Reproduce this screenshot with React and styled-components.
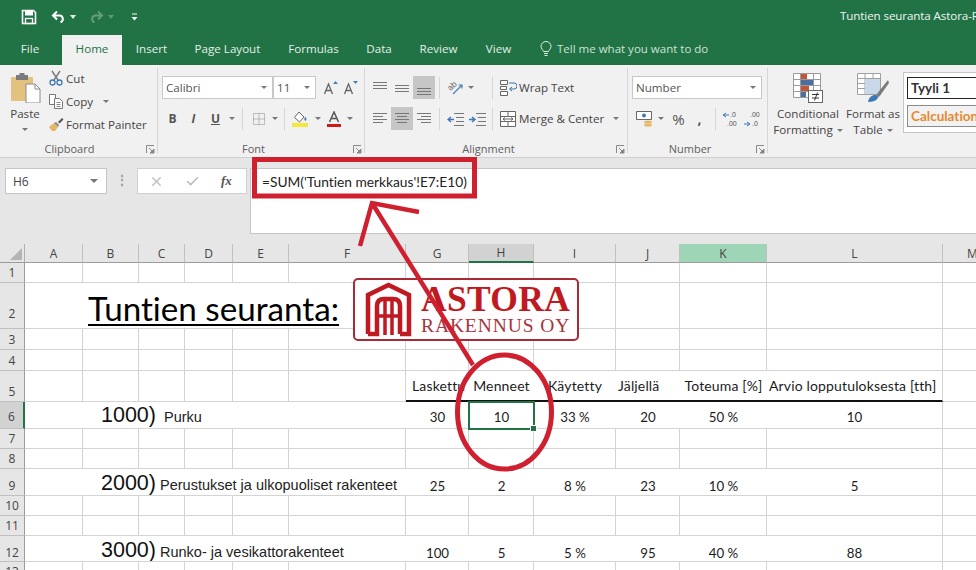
import React from "react";
import styled, { createGlobalStyle } from "styled-components";
import { X, Check } from "lucide-react";

const UI = `"Open Sans", "Noto Sans", sans-serif`;
const CELL = `Lato, "Open Sans", sans-serif`;
const GREEN = "#217346";
const RED = "#cf2030";

const GlobalStyle = createGlobalStyle`
  html, body { margin: 0; padding: 0; background: #fff; }
  body { font-family: ${UI}; font-variant-ligatures: none; }
`;

const Page = styled.div`
  position: relative;
  width: 976px;
  height: 570px;
  overflow: hidden;
`;

/* title bar + tabs */
const TitleBar = styled.div`
  height: 35px;
  background: ${GREEN};
  display: flex;
  align-items: center;
  padding-left: 21px;
  color: #fff;
`;
const Qat = styled.div`
  display: flex;
  align-items: center;
  gap: 4px;
  margin-top: -2px;
`;
const DocTitle = styled.div`
  margin-left: auto;
  width: 136px;
  margin-top: -4px;
  overflow: hidden;
  white-space: nowrap;
  font-size: 11.6px;
  letter-spacing: -0.1px;
  color: #eef5f0;
`;
const Tabs = styled.div`
  height: 30px;
  background: ${GREEN};
  display: flex;
  padding-left: 6px;
`;
const Tab = styled.div`
  width: ${(p) => p.$w}px;
  margin-left: ${(p) => p.$ml || 0}px;
  display: flex;
  align-items: center;
  justify-content: center;
  font-size: 11.6px;
  padding-bottom: 3px;
  box-sizing: border-box;
  color: ${(p) => (p.$active ? GREEN : "#e4efe8")};
  background: ${(p) => (p.$active ? "#f1f1f1" : "transparent")};
`;
const TellMe = styled.div`
  display: flex;
  align-items: center;
  gap: 5px;
  margin-left: 15px;
  padding-bottom: 3px;
  font-size: 11.5px;
  color: #cfe2d7;
`;

/* ribbon */
const Ribbon = styled.div`
  height: 93px;
  box-sizing: border-box;
  background: #f1f1f1;
  border-bottom: 1px solid #cfcfcf;
  display: flex;
  overflow: hidden;
  color: #444;
  font-size: 11.6px;
`;
const Group = styled.div`
  position: relative;
  width: ${(p) => p.$w}px;
  flex: none;
  box-sizing: border-box;
  margin: 3px 0 4px;
  border-right: ${(p) => (p.$last ? "none" : "1px solid #d6d6d6")};
  display: flex;
  flex-direction: column;
`;
const GroupBody = styled.div`
  height: 75px;
  flex: none;
  display: flex;
  padding-left: ${(p) => p.$pl || 0}px;
  padding-top: ${(p) => p.$pt || 0}px;
  box-sizing: border-box;
`;
const GroupLabel = styled.div`
  height: 12px;
  flex: none;
  line-height: 12px;
  text-align: center;
  font-size: 11px;
  padding-right: ${(p) => p.$pr ?? 15}px;
  color: #606060;
`;
const Launcher = styled.svg`
  position: absolute;
  right: 2px;
  bottom: -1px;
  width: 9px;
  height: 9px;
`;
const Caret = styled.span`
  display: inline-block;
  flex: none;
  width: 0;
  height: 0;
  margin-left: ${(p) => p.$ml || 0}px;
  border-left: 3px solid transparent;
  border-right: 3px solid transparent;
  border-top: 3px solid #777;
`;
const PasteBtn = styled.div`
  width: 34px;
  display: flex;
  flex-direction: column;
  align-items: center;
  margin-left: 8px;
  padding-top: 5px;
  span.label { margin-top: 3px; line-height: 16px; }
`;
const ClipList = styled.div`
  display: flex;
  flex-direction: column;
  margin-left: 6px;
  padding-top: 1px;
  gap: 5px;
`;
const ClipRow = styled.div`
  height: 18px;
  display: flex;
  align-items: center;
  white-space: nowrap;
  svg { width: 16px; height: 16px; margin-right: 2px; flex: none; }
`;
const Stack = styled.div`
  display: flex;
  flex-direction: column;
  gap: ${(p) => p.$gap ?? 8}px;
`;
const ToolRow = styled.div`
  display: flex;
  align-items: center;
  height: 23px;
`;
const Combo = styled.div`
  width: ${(p) => p.$w}px;
  height: 23px;
  box-sizing: border-box;
  margin-left: ${(p) => p.$ml || 0}px;
  background: #fff;
  border: 1px solid #c8c8c8;
  display: flex;
  align-items: center;
  justify-content: space-between;
  padding: 0 5px 0 3px;
  color: #555;
`;
const Tool = styled.div`
  width: ${(p) => p.$w || 22}px;
  height: 23px;
  flex: none;
  display: flex;
  align-items: center;
  justify-content: center;
  background: ${(p) => (p.$active ? "#c6c6c6" : "transparent")};
  font-weight: ${(p) => (p.$bold ? 700 : 400)};
  font-style: ${(p) => (p.$italic ? "italic" : "normal")};
  text-decoration: ${(p) => (p.$under ? "underline" : "none")};
  font-size: ${(p) => p.$fs || 12}px;
  color: #555;
`;
const Sep = styled.div`
  width: 1px;
  height: 22px;
  flex: none;
  margin: 0 ${(p) => p.$m || 4}px;
  background: #d6d6d6;
`;
const WideBtn = styled.div`
  display: flex;
  align-items: center;
  white-space: nowrap;
  height: 23px;
  margin-left: 3px;
  svg { margin-right: 2px; }
`;
const BigBtn = styled.div`
  width: ${(p) => p.$w}px;
  flex: none;
  display: flex;
  flex-direction: column;
  align-items: center;
  padding-top: 5px;
  line-height: 16px;
  text-align: center;
  svg { margin-bottom: 3px; }
`;
const Gallery = styled.div`
  width: 90px;
  height: 61px;
  margin-top: 4px;
  box-sizing: border-box;
  border: 1px solid #c6c6c6;
  border-right: none;
  background: #fff;
  padding: 4px 0 0 3px;
  display: flex;
  flex-direction: column;
  gap: 6px;
`;
const StyleChip = styled.div`
  height: 22px;
  box-sizing: border-box;
  border: 1px solid ${(p) => (p.$calc ? "#8c8c8c" : "#222")};
  border-right: none;
  background: ${(p) => (p.$calc ? "#f2f2f2" : "#fff")};
  color: ${(p) => (p.$calc ? "#e8892f" : "#333")};
  font-family: ${CELL};
  font-weight: 700;
  font-size: 13.5px;
  line-height: 20px;
  padding-left: 3px;
  white-space: nowrap;
  overflow: hidden;
`;

/* formula bar */
const FormulaArea = styled.div`
  height: 86px;
  background: #e6e6e6;
  display: flex;
  align-items: flex-start;
  padding-top: 10px;
  box-sizing: border-box;
`;
const NameBox = styled.div`
  width: 102px;
  height: 26px;
  margin-left: 5px;
  box-sizing: border-box;
  background: #fff;
  border: 1px solid #c6c6c6;
  display: flex;
  align-items: center;
  justify-content: space-between;
  padding: 0 8px 0 7px;
  font-size: 12px;
  color: #444;
`;
const Dots = styled.div`
  width: 30px;
  text-align: center;
  color: #999;
  font-size: 12px;
  line-height: 24px;
  font-weight: 700;
`;
const FxBox = styled.div`
  width: 110px;
  height: 26px;
  box-sizing: border-box;
  background: #fff;
  border: 1px solid #d0d0d0;
  display: flex;
  align-items: center;
  gap: 21px;
  padding-left: 11px;
  span {
    font-family: "Liberation Serif", serif;
    font-style: italic;
    font-weight: 700;
    font-size: 13px;
    color: #555;
  }
`;
const FormulaBar = styled.div`
  flex: 1;
  height: 66px;
  margin-left: 3px;
  box-sizing: border-box;
  background: #fff;
  border-left: 1px solid #c6c6c6;
  border-top: 1px solid #c6c6c6;
  border-bottom: 1px solid #c6c6c6;
  padding: 4px 0 0 11px;
  font-family: ${CELL};
  font-size: 13.75px;
  line-height: 18px;
  color: #222;
`;

/* sheet */
const Sheet = styled.div`
  display: grid;
  grid-template-columns: 25px 58px 56px 46px 48px 56px 117px 63px 65px 82px 64px 87px 176px 60px;
  grid-template-rows: 19px 20px 46px 21px 21px 31px 27px 20px 20px 27px 20px 20px 26px 20px;
  background: #fff;
  font-family: ${CELL};
`;
const Corner = styled.div`
  background: #e6e6e6;
  border-bottom: 1px solid #9c9c9c;
  border-right: 1px solid #b0b0b0;
  position: relative;
  &::after {
    content: "";
    position: absolute;
    right: 2px;
    bottom: 2px;
    width: 0;
    height: 0;
    border-left: 12px solid transparent;
    border-bottom: 12px solid #b4b4b4;
  }
`;
const ColHead = styled.div`
  box-sizing: border-box;
  background: ${(p) => (p.$tone === "sel" ? "#d2d2d2" : p.$tone === "mark" ? "#9fd5b7" : "#e6e6e6")};
  border-bottom: ${(p) => (p.$tone === "sel" ? `2px solid ${GREEN}` : "1px solid #9c9c9c")};
  border-right: 1px solid #c0c0c0;
  font-family: ${UI};
  font-size: 12px;
  color: #444;
  display: flex;
  align-items: center;
  justify-content: center;
`;
const RowHead = styled.div`
  box-sizing: border-box;
  background: ${(p) => (p.$sel ? "#d2d2d2" : "#e6e6e6")};
  border-bottom: 1px solid #c0c0c0;
  border-right: ${(p) => (p.$sel ? `2px solid ${GREEN}` : "1px solid #9c9c9c")};
  font-family: ${UI};
  font-size: 12px;
  line-height: 16px;
  color: #444;
  display: flex;
  align-items: flex-end;
  justify-content: center;
  padding-bottom: ${(p) => p.$pb}px;
`;
const Cell = styled.div`
  box-sizing: border-box;
  grid-column: span ${(p) => p.$span || 1};
  border-bottom: ${(p) => (p.$rule ? "2px solid #111" : "1px solid #d4d4d4")};
  border-right: ${(p) => (p.$open ? "none" : "1px solid #d4d4d4")};
  display: flex;
  align-items: flex-end;
  justify-content: ${(p) => (p.$left ? "flex-start" : "center")};
  padding: 0 0 ${(p) => p.$pb ?? 2}px ${(p) => p.$pl || 0}px;
  overflow: hidden;
  white-space: nowrap;
  font-size: ${(p) => (p.$rule ? 14 : 13.3)}px;
  letter-spacing: ${(p) => (p.$rule ? 0.15 : 0)}px;
  line-height: 16px;
  color: #1c1c1c;
`;
const SheetTitle = styled.span`
  font-size: 33.2px;
  line-height: 40px;
  color: #000;
  text-decoration: underline;
  text-decoration-thickness: 2px;
  text-underline-offset: 3px;
`;
const Code = styled.span`
  font-family: "Liberation Sans", Arial, sans-serif;
  font-size: 21.5px;
  line-height: 22px;
  color: #111;
`;
const Desc = styled.span`
  font-family: "Liberation Sans", Arial, sans-serif;
  font-size: 14.5px;
  line-height: 18px;
  margin-left: ${(p) => p.$ml}px;
  color: #222;
`;

/* things over the sheet */
const Selection = styled.div`
  position: absolute;
  left: 468px;
  top: 401px;
  width: 67px;
  height: 29px;
  box-sizing: border-box;
  border: 2px solid ${GREEN};
  &::after {
    content: "";
    position: absolute;
    right: -4px;
    bottom: -4px;
    width: 5px;
    height: 5px;
    background: ${GREEN};
    border: 1px solid #fff;
  }
`;
const Logo = styled.div`
  position: absolute;
  left: 353px;
  top: 278px;
  width: 226px;
  height: 63px;
  box-sizing: border-box;
  background: #fffdfd;
  border: 2px solid #a82a35;
  border-radius: 5px;
  display: flex;
  align-items: center;
  padding-left: 10px;
  gap: 9px;
  color: #bf1a22;
`;
const LogoWords = styled.div`
  display: flex;
  flex-direction: column;
  gap: 6px;
  font-family: "Liberation Serif", serif;
`;
const LogoMain = styled.span`
  font-size: 35.5px;
  font-weight: 700;
  line-height: 26px;
  letter-spacing: 0.3px;
`;
const LogoSub = styled.span`
  font-size: 19.5px;
  line-height: 15px;
  letter-spacing: 0.9px;
  color: #a9343c;
`;
const Overlay = styled.svg`
  position: absolute;
  left: 0;
  top: 0;
  pointer-events: none;
`;

/* icons */
const SaveIcon = () => (
  <svg width="16" height="16" viewBox="0 0 16 16">
    <path d="M1.500 1.500h11l2 2v11h-13z" fill="none" stroke="#fff" strokeWidth="1.600" />
    <rect x="4" y="2" width="8" height="4.500" fill="#fff" />
    <rect x="4.500" y="9.500" width="7" height="5" fill="none" stroke="#fff" strokeWidth="1.300" />
  </svg>
);
const UndoIcon = ({ flip, dim }) => (
  <svg width="15" height="14" viewBox="0 0 15 14" style={{ transform: flip ? "scaleX(-1)" : "none", opacity: dim ? 0.3 : 1 }}>
    <path d="M6 1.500 2 5.500l4 4M2 5.500h6.500a3.500 3.500 0 0 1 1 6.800" fill="none" stroke="#fff" strokeWidth="2" />
  </svg>
);
const MiniCaret = ({ dim }) => (
  <svg width="6" height="4" viewBox="0 0 6 4" style={{ opacity: dim ? 0.3 : 1 }}>
    <path d="M0 0h6L3 4z" fill="#e8f1ec" />
  </svg>
);
const QatMore = () => (
  <svg width="7" height="8" viewBox="0 0 7 8" style={{ marginLeft: 13 }}>
    <path d="M1 1h5" stroke="#fff" />
    <path d="M0.500 4h6L3.500 7.500z" fill="#fff" />
  </svg>
);
const Bulb = () => (
  <svg width="12" height="16" viewBox="0 0 12 16">
    <path d="M3.500 10.500C3 8.500 1 8 1 5.500a5 5 0 0 1 10 0C11 8 9 8.500 8.500 10.500z" fill="none" stroke="#dfece5" />
    <path d="M4 12.500h4M4.500 14.500h3" stroke="#dfece5" />
  </svg>
);
const PasteIcon = () => (
  <svg width="31" height="30" viewBox="0 0 31 30">
    <rect x="1" y="4" width="22" height="24" rx="1" fill="#e3c17f" />
    <rect x="6" y="2" width="12" height="5" fill="#7b7b7b" />
    <rect x="9.500" y="0" width="5" height="3" fill="#7b7b7b" />
    <path d="M16 11h9l5 5v14H16z" fill="#fff" stroke="#8c8c8c" />
    <path d="M25 11v5h5" fill="none" stroke="#8c8c8c" />
  </svg>
);
const CutIcon = () => (
  <svg viewBox="0 0 16 16">
    <path d="M4 1l6 9M12 1 6 10" stroke="#777" strokeWidth="1.400" />
    <circle cx="4.500" cy="12.500" r="2.500" fill="none" stroke="#3c78b4" strokeWidth="1.300" />
    <circle cx="11.500" cy="12.500" r="2.500" fill="none" stroke="#3c78b4" strokeWidth="1.300" />
  </svg>
);
const CopyIcon = () => (
  <svg viewBox="0 0 16 16">
    <path d="M1.500 1.500h6v10h-6z" fill="#fff" stroke="#777" />
    <path d="M6.500 5.500h5l3 3v7h-8z" fill="#fff" stroke="#777" />
    <path d="M8.500 9.500h4M8.500 11.500h4M8.500 13.500h4" stroke="#888" />
  </svg>
);
const BrushIcon = () => (
  <svg viewBox="0 0 16 16">
    <path d="M1 11l5-4 4 4-3 4H4z" fill="#e3b766" />
    <path d="M6 7l4 4 1-2-3-3z" fill="#8a8a8a" />
    <path d="M10 6l4-4 1.500 1.500-4 4z" fill="#555" />
  </svg>
);
const BorderIcon = () => (
  <svg width="14" height="14" viewBox="0 0 14 14">
    <path d="M1.500 1.500h11v11h-11zM7 1.500v11M1.500 7h11" fill="none" stroke="#888" strokeDasharray="1 1" />
  </svg>
);
const FillIcon = () => (
  <svg width="18" height="16" viewBox="0 0 18 16">
    <path d="M7 1 2.500 6.500 7.500 11 12 6z" fill="#fff" stroke="#666" />
    <path d="M13 5.500c1.500 2 2 3 1 4-1 .6-2-.4-1.500-2z" fill="#3c78b4" />
    <rect x="0" y="12" width="16" height="4" fill="#f4e83a" />
  </svg>
);
const ColorA = () => (
  <svg width="14" height="16" viewBox="0 0 14 16">
    <path d="M2.500 11 7 1l4.500 10M4.200 7.500h5.600" fill="none" stroke="#555" strokeWidth="1.500" />
    <rect x="0" y="13" width="14" height="3" fill="#d01a1a" />
  </svg>
);
const GrowA = ({ small }) => (
  <svg width="16" height="15" viewBox="0 0 16 15">
    <path d="M1.500 14 5.500 4l4 10M3 10.500h5" fill="none" stroke="#666" strokeWidth="1.300" />
    <path d={small ? "M10 1h5l-2.500 3z" : "M10 4h5l-2.500-3z"} fill="#4a7fb5" />
  </svg>
);
const Lines = ({ rows, w = 16 }) => (
  <svg width={w} height="16" viewBox={`0 0 ${w} 16`}>
    {rows.map(([a, b, y], i) => (
      <path key={i} d={`M${a} ${y + 0.5}H${b}`} stroke="#777" />
    ))}
  </svg>
);
const Orient = () => (
  <svg width="17" height="16" viewBox="0 0 17 16">
    <text x="1" y="9" fontSize="8.500" fill="#666" fontFamily="Liberation Sans" transform="rotate(-45 5 7)">ab</text>
    <path d="M6 14 15 5M11.500 5H15v3.500" fill="none" stroke="#4a7fb5" strokeWidth="1.200" />
  </svg>
);
const Indent = ({ flip }) => (
  <svg width="17" height="14" viewBox="0 0 17 14">
    <path d="M7 1.500h10M9 5.500h8M9 9.500h8M7 13.500h10" stroke="#777" />
    {flip ? (
      <path d="M0 7.500h5M3 5l3 2.500L3 10" fill="none" stroke="#3c78b4" strokeWidth="1.400" />
    ) : (
      <path d="M7 7.500H1M4 5 1 7.500 4 10" fill="none" stroke="#3c78b4" strokeWidth="1.400" />
    )}
  </svg>
);
const WrapIcon = () => (
  <svg width="17" height="16" viewBox="0 0 17 16">
    <path d="M.5.500h7v4h-7zM.5 6.500h6v3h-6zM.5 11.500h7v4h-7z" fill="#fff" stroke="#666" />
    <path d="M9 3h5a2 2 0 0 1 0 6h-4M12 7 9.500 9l2.500 2" fill="none" stroke="#3c78b4" />
  </svg>
);
const MergeIcon = () => (
  <svg width="17" height="16" viewBox="0 0 17 16">
    <path d="M.5.500h15v15H.5zM.5 5.500h15M.5 10.500h15M8 .5v5M8 10.500v5" fill="#fff" stroke="#666" />
    <path d="M3 8h10M5 6.500 3 8l2 1.500M11 6.500 13 8l-2 1.500" fill="none" stroke="#666" />
  </svg>
);
const MoneyIcon = () => (
  <svg width="18" height="17" viewBox="0 0 18 17">
    <path d="M.5 1.500h15v8H.5z" fill="#fff" stroke="#666" />
    <circle cx="8" cy="5.500" r="2" fill="#3c78b4" />
    <ellipse cx="12" cy="12" rx="4" ry="1.500" fill="#e3b766" />
    <ellipse cx="12" cy="15" rx="4" ry="1.500" fill="#e3b766" />
  </svg>
);
const DecIcon = ({ more }) => (
  <svg width="20" height="18" viewBox="0 0 20 18">
    <path d={more ? "M1 5H7M4 3 1 5l3 2" : "M1 14h6M4 12l3 2-3 2"} fill="none" stroke="#3c78b4" />
    <text x={more ? 8 : 7} y="7" fontSize="7" fill="#555" fontFamily="Liberation Sans">{more ? ".0" : ".00"}</text>
    <text x={more ? 5 : 9} y="16" fontSize="7" fill="#555" fontFamily="Liberation Sans">{more ? ".00" : ".0"}</text>
  </svg>
);
const CondIcon = () => (
  <svg width="30" height="30" viewBox="0 0 30 30">
    <path d="M.5.500h27v24H.5zM7.500.5v24M20.500.5v24M.5 6.500h27M.5 12.500h27M.5 18.500h27" fill="#fff" stroke="#9a9a9a" />
    <rect x="8" y="1" width="6" height="5" fill="#c0573a" />
    <rect x="8" y="7" width="12" height="5" fill="#4a6fa5" />
    <rect x="8" y="13" width="8" height="5" fill="#c0573a" />
    <rect x="8" y="19" width="5" height="5" fill="#4a6fa5" />
    <rect x="15.500" y="17.500" width="14" height="12" fill="#fff" stroke="#666" />
    <path d="M19 21.500h7M19 25h7M24.500 19.500l-3 8" stroke="#333" />
  </svg>
);
const TableIcon = () => (
  <svg width="32" height="30" viewBox="0 0 32 30">
    <path d="M.5.500h23v21H.5zM.5 5.500h23M.5 10.500h23M.5 15.500h23M8 .5v21M16 .5v21" fill="#fff" stroke="#a0a0a0" />
    <rect x="8" y="6" width="15" height="15" fill="#c9d8e8" />
    <path d="M31 7 19 22l3 2L32 10z" fill="#7a7a7a" />
    <path d="M11 29c1-5 4-7 7-7 2 0 4 2 3 3-2 3-6 4-10 4z" fill="#3c78b4" />
  </svg>
);
const LauncherIcon = () => (
  <Launcher viewBox="0 0 9 9">
    <path d="M.5 8V.5H8" fill="none" stroke="#888" />
    <path d="M3 3l4 4M8 4v4H4z" fill="#888" stroke="#888" />
  </Launcher>
);
const HouseMark = () => (
  <svg width="47" height="55" viewBox="0 0 47 55" style={{ flex: "none" }}>
    <g fill="none" stroke="#bf1a22" strokeWidth="4.500">
      <path d="M3 52V13L23.500 3 44 13v39H35" />
      <path d="M3 52h9V24q0-7 7-7h9q7 0 7 7v28" />
      <path d="M20 17v36M27 17v36M13 34h21" strokeWidth="3.500" />
    </g>
  </svg>
);

const COLS = ["A", "B", "C", "D", "E", "F", "G", "H", "I", "J", "K", "L", "M"];
const PLAIN_ROWS = [1, 3, 4, 7, 8, 10, 11, 13];
const ROW_PAD = { 2: 6, 6: 3, 9: 1, 12: 0 };
const VALUES = {
  6: ["30", "10", "33 %", "20", "50 %", "10"],
  9: ["25", "2", "8 %", "23", "10 %", "5"],
  12: ["100", "5", "5 %", "95", "40 %", "88"],
};
const CODES = {
  6: ["1000)", "Purku", 8, 2],
  9: ["2000)", "Perustukset ja ulkopuoliset rakenteet", 4, 1],
  12: ["3000)", "Runko- ja vesikattorakenteet", 4, 0],
};
const HEADS = [
  ["Laskettu", true, 6],
  ["Menneet"],
  ["Käytetty"],
  ["Jäljellä", true, 2],
  ["Toteuma [%]"],
  ["Arvio lopputuloksesta [tth]", true, 2],
];

const renderRow = (n) => {
  if (PLAIN_ROWS.includes(n)) {
    return COLS.map((c) => <Cell key={n + c} />);
  }
  if (n === 2) {
    return [
      <Cell key="title" $span={6} $left $pl={63} $pb={0} $open>
        <SheetTitle>Tuntien seuranta:</SheetTitle>
      </Cell>,
      ...COLS.slice(6).map((c) => <Cell key={n + c} />),
    ];
  }
  if (n === 5) {
    return [
      ...COLS.slice(0, 6).map((c) => <Cell key={n + c} />),
      ...HEADS.map(([label, left, pl], i) => (
        <Cell key={label} $rule $open={i < 5} $left={left} $pl={pl} $pb={6}>
          {label}
        </Cell>
      )),
      <Cell key="5M" />,
    ];
  }
  const [code, desc, ml, pb] = CODES[n];
  return [
    <Cell key={code} $span={6} $left $pl={76} $pb={pb} $open>
      <Code>{code}</Code>
      <Desc $ml={ml}>{desc}</Desc>
    </Cell>,
    ...VALUES[n].map((v, i) => (
      <Cell key={n + "v" + i} $open={i < 5} $pb={ROW_PAD[n]}>
        {v}
      </Cell>
    )),
    <Cell key={n + "M"} />,
  ];
};

const App = () => {
  return (
    <Page>
      <GlobalStyle />
      <TitleBar>
        <Qat>
          <SaveIcon />
          <span style={{ width: 6 }} />
          <UndoIcon />
          <MiniCaret />
          <span style={{ width: 5 }} />
          <UndoIcon flip dim />
          <MiniCaret dim />
          <QatMore />
        </Qat>
        <DocTitle>Tuntien seuranta Astora-Rakennus</DocTitle>
      </TitleBar>
      <Tabs>
        <Tab $w={48}>File</Tab>
        <Tab $w={60} $ml={8} $active>Home</Tab>
        <Tab $w={59}>Insert</Tab>
        <Tab $w={93}>Page Layout</Tab>
        <Tab $w={79}>Formulas</Tab>
        <Tab $w={52}>Data</Tab>
        <Tab $w={67}>Review</Tab>
        <Tab $w={53}>View</Tab>
        <TellMe>
          <Bulb />
          Tell me what you want to do
        </TellMe>
      </Tabs>
      <Ribbon>
        <Group $w={158}>
          <GroupBody>
            <PasteBtn>
              <PasteIcon />
              <span className="label">Paste</span>
              <Caret style={{ marginTop: 6 }} />
            </PasteBtn>
            <ClipList>
              <ClipRow><CutIcon />Cut</ClipRow>
              <ClipRow><CopyIcon />Copy<Caret $ml={10} /></ClipRow>
              <ClipRow><BrushIcon />Format Painter</ClipRow>
            </ClipList>
          </GroupBody>
          <GroupLabel $pr={18}>Clipboard</GroupLabel>
          <LauncherIcon />
        </Group>
        <Group $w={207}>
          <GroupBody $pl={4} $pt={8}>
            <Stack>
              <ToolRow>
                <Combo $w={111}>Calibri<Caret /></Combo>
                <Combo $w={43}>11<Caret /></Combo>
                <Tool $w={20} $fs={13} style={{ marginLeft: 5 }}><GrowA /></Tool>
                <Tool $w={20} $fs={13}><GrowA small /></Tool>
              </ToolRow>
              <ToolRow>
                <Tool $w={21} $bold>B</Tool>
                <Tool $w={21} $italic $bold>I</Tool>
                <Tool $w={23} $under $bold>U</Tool>
                <Tool $w={10}><Caret /></Tool>
                <Sep $m={5} />
                <Tool $w={22}><BorderIcon /></Tool>
                <Tool $w={10}><Caret /></Tool>
                <Sep $m={4} />
                <Tool $w={24}><FillIcon /></Tool>
                <Tool $w={10}><Caret /></Tool>
                <Tool $w={22}><ColorA /></Tool>
                <Tool $w={10}><Caret /></Tool>
              </ToolRow>
            </Stack>
          </GroupBody>
          <GroupLabel>Font</GroupLabel>
          <LauncherIcon />
        </Group>
        <Group $w={263}>
          <GroupBody $pl={4} $pt={8}>
            <Stack>
              <ToolRow>
                <Tool><Lines rows={[[1, 15, 2], [1, 15, 5], [1, 15, 8]]} /></Tool>
                <Tool><Lines rows={[[1, 15, 5], [1, 15, 8], [1, 15, 11]]} /></Tool>
                <Tool $active><Lines rows={[[1, 15, 8], [1, 15, 11], [1, 15, 14]]} /></Tool>
                <Sep />
                <Tool><Orient /></Tool>
                <Tool $w={18} style={{ justifyContent: "flex-start", paddingLeft: 2, boxSizing: "border-box" }}><Caret /></Tool>
                <Tool $w={4} />
                <Sep />
                <WideBtn><WrapIcon />Wrap Text</WideBtn>
              </ToolRow>
              <ToolRow>
                <Tool><Lines rows={[[1, 15, 2], [1, 11, 5], [1, 15, 8], [1, 11, 11]]} /></Tool>
                <Tool $active><Lines rows={[[1, 15, 2], [3, 13, 5], [1, 15, 8], [3, 13, 11]]} /></Tool>
                <Tool><Lines rows={[[1, 15, 2], [5, 15, 5], [1, 15, 8], [5, 15, 11]]} /></Tool>
                <Sep />
                <Tool><Indent /></Tool>
                <Tool><Indent flip /></Tool>
                <Sep />
                <WideBtn><MergeIcon />Merge &amp; Center<Caret $ml={9} /></WideBtn>
              </ToolRow>
            </Stack>
          </GroupBody>
          <GroupLabel>Alignment</GroupLabel>
          <LauncherIcon />
        </Group>
        <Group $w={140}>
          <GroupBody $pl={4} $pt={8}>
            <Stack>
              <ToolRow>
                <Combo $w={130}>Number<Caret /></Combo>
              </ToolRow>
              <ToolRow>
                <Tool $w={25}><MoneyIcon /></Tool>
                <Tool $w={8}><Caret /></Tool>
                <Tool $w={3} />
                <Tool $w={21} $fs={15}>%</Tool>
                <Tool $w={21} $fs={14} $bold>,</Tool>
                <Sep $m={5} />
                <Tool $w={22}><DecIcon more /></Tool>
                <Tool $w={20}><DecIcon /></Tool>
              </ToolRow>
            </Stack>
          </GroupBody>
          <GroupLabel>Number</GroupLabel>
          <LauncherIcon />
        </Group>
        <Group $w={208} $last>
          <GroupBody $pl={5}>
            <BigBtn $w={70}>
              <CondIcon />
              <span>Conditional</span>
              <span>Formatting<Caret $ml={4} style={{ verticalAlign: "middle" }} /></span>
            </BigBtn>
            <BigBtn $w={60}>
              <TableIcon />
              <span>Format as</span>
              <span>Table<Caret $ml={4} style={{ verticalAlign: "middle" }} /></span>
            </BigBtn>
            <Gallery>
              <StyleChip>Tyyli 1</StyleChip>
              <StyleChip $calc>Calculation</StyleChip>
            </Gallery>
          </GroupBody>
        </Group>
      </Ribbon>
      <FormulaArea>
        <NameBox>H6<Caret style={{ borderLeftWidth: 4, borderRightWidth: 4, borderTopWidth: 4 }} /></NameBox>
        <Dots>⋮</Dots>
        <FxBox>
          <X size={15} color="#bcbcbc" />
          <Check size={15} color="#bcbcbc" strokeWidth={2.5} />
          <span>fx</span>
        </FxBox>
        <FormulaBar>=SUM('Tuntien merkkaus'!E7:E10)</FormulaBar>
      </FormulaArea>
      <Sheet>
        <Corner />
        {COLS.map((c) => (
          <ColHead key={c} $tone={c === "H" ? "sel" : c === "K" ? "mark" : undefined}>{c}</ColHead>
        ))}
        {Array.from({ length: 13 }, (_, i) => i + 1).map((n) => (
          <React.Fragment key={n}>
            <RowHead $sel={n === 6} $pb={ROW_PAD[n] ?? 1}>{n}</RowHead>
            {renderRow(n)}
          </React.Fragment>
        ))}
      </Sheet>
      <Selection />
      <Logo>
        <HouseMark />
        <LogoWords>
          <LogoMain>ASTORA</LogoMain>
          <LogoSub>RAKENNUS OY</LogoSub>
        </LogoWords>
      </Logo>
      <Overlay width="976" height="570" viewBox="0 0 976 570">
        <rect x="254.500" y="159.500" width="220" height="36.500" fill="none" stroke={RED} strokeWidth="5" />
        <path d="M360 246 372 203 419 212M372 203 473 365" fill="none" stroke={RED} strokeWidth="4.500" strokeLinejoin="miter" />
        <ellipse cx="504.500" cy="412" rx="47" ry="57" fill="none" stroke={RED} strokeWidth="5" />
      </Overlay>
    </Page>
  );
};

export default App;
